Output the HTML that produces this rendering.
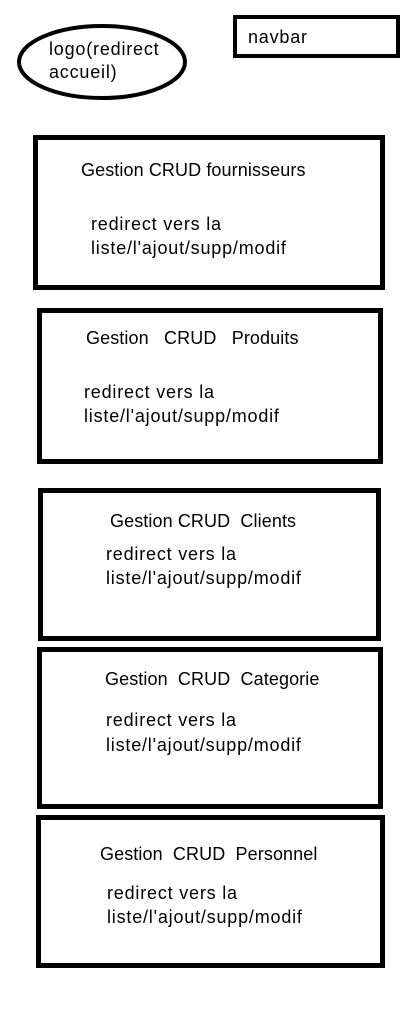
<!DOCTYPE html>
<html><head><meta charset="utf-8"><style>
body{margin:0;width:420px;height:1012px;background:#fff;position:relative;overflow:hidden;font-family:"Liberation Sans",sans-serif;font-size:18px;letter-spacing:0.8px;color:#000}
.t{position:absolute;line-height:24px;white-space:pre}
.h{letter-spacing:0.1px}
.b{position:absolute;border:5px solid #000;box-sizing:border-box}
</style></head><body>
<svg width="420" height="1012" style="position:absolute;left:0;top:0">
<ellipse cx="102" cy="62" rx="83" ry="36" fill="none" stroke="#000" stroke-width="4"/>
</svg>
<div class="b" style="left:233px;top:15px;width:167px;height:43px;border-width:4px"></div>
<div class="b" style="left:33px;top:135px;width:352px;height:155px"></div>
<div class="b" style="left:37px;top:308px;width:346px;height:156px"></div>
<div class="b" style="left:38px;top:488px;width:343px;height:153px"></div>
<div class="b" style="left:37px;top:647px;width:346px;height:162px"></div>
<div class="b" style="left:36px;top:815px;width:349px;height:153px"></div>

<div class="t" style="left:49px;top:37px">logo(redirect</div>
<div class="t" style="left:49px;top:60px">accueil)</div>
<div class="t" style="left:248px;top:25px">navbar</div>

<div class="t h" style="left:81px;top:158px">Gestion CRUD fournisseurs</div>
<div class="t" style="left:91px;top:212px">redirect vers la</div>
<div class="t" style="left:91px;top:236px">liste/l'ajout/supp/modif</div>

<div class="t h" style="left:86px;top:326px">Gestion   CRUD   Produits</div>
<div class="t" style="left:84px;top:380px">redirect vers la</div>
<div class="t" style="left:84px;top:404px">liste/l'ajout/supp/modif</div>

<div class="t h" style="left:110px;top:509px">Gestion CRUD  Clients</div>
<div class="t" style="left:106px;top:542px">redirect vers la</div>
<div class="t" style="left:106px;top:566px">liste/l'ajout/supp/modif</div>

<div class="t h" style="left:105px;top:667px">Gestion  CRUD  Categorie</div>
<div class="t" style="left:106px;top:708px">redirect vers la</div>
<div class="t" style="left:106px;top:733px">liste/l'ajout/supp/modif</div>

<div class="t h" style="left:100px;top:842px">Gestion  CRUD  Personnel</div>
<div class="t" style="left:107px;top:881px">redirect vers la</div>
<div class="t" style="left:107px;top:905px">liste/l'ajout/supp/modif</div>
</body></html>
